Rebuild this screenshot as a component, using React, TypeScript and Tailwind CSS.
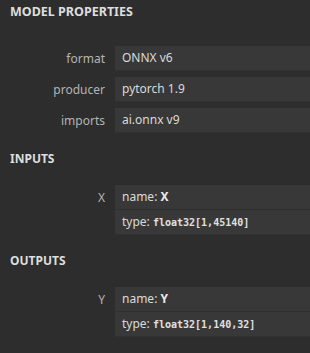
import React from "react";

const sans = { fontFamily: '"Segoe UI", "Noto Sans", "Open Sans", sans-serif' };

const Label = ({ children }: { children: React.ReactNode }) => (
  <div className="w-[105px] shrink-0 h-[25px] flex items-center justify-end text-[12px] text-[#b4b4b4]">
    {children}
  </div>
);

const Mono = ({ children }: { children: React.ReactNode }) => (
  <span
    className="font-bold text-[10px] text-[#e0e0e0]"
    style={{ fontFamily: '"DejaVu Sans Mono", "Liberation Mono", monospace' }}
  >
    {children}
  </span>
);

const props = [
  { name: "format", value: "ONNX v6" },
  { name: "producer", value: "pytorch 1.9" },
  { name: "imports", value: "ai.onnx v9" },
];

const Argument = ({ name, type }: { name: string; type: string }) => (
  <div className="flex gap-[10px]">
    <Label>{name}</Label>
    <div className="flex-1 bg-[#383838]">
      <div className="h-[25px] flex items-center px-[7px] text-[12px] text-[#dadada] border-b border-[#2f2f2f]">
        name:&nbsp;<b className="text-[#e8e8e8]">{name}</b>
      </div>
      <div className="h-[25px] flex items-center px-[7px] text-[12px] text-[#dadada] border-b border-[#313131]">
        type:&nbsp;<Mono>{type}</Mono>
      </div>
    </div>
  </div>
);

const Section = ({ title }: { title: string }) => (
  <div className="h-[52px] flex items-center px-[10px] text-[12px] font-bold text-[#dedede]">{title}</div>
);

export default function App() {
  return (
    <div className="w-[310px] h-[353px] bg-[#2d2d2d] overflow-hidden" style={sans}>
      <div className="h-[24px] flex items-center px-[10px] text-[12.5px] font-bold text-[#dedede]">
        MODEL PROPERTIES
      </div>
      <div className="pt-[22px] flex flex-col gap-[6px]">
        {props.map((p) => (
          <div key={p.name} className="flex gap-[10px]">
            <Label>{p.name}</Label>
            <div className="flex-1 h-[25px] flex items-center px-[7px] bg-[#383838] border-b border-[#313131] text-[12px] text-[#dadada]">
              {p.value}
            </div>
          </div>
        ))}
      </div>
      <Section title="INPUTS" />
      <Argument name="X" type="float32[1,45140]" />
      <Section title="OUTPUTS" />
      <Argument name="Y" type="float32[1,140,32]" />
    </div>
  );
}
